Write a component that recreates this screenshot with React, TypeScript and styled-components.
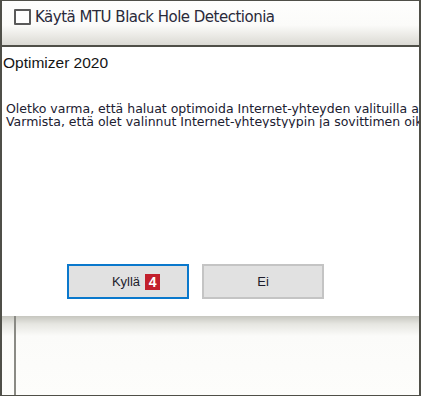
import styled, { createGlobalStyle } from "styled-components";

const GlobalStyle = createGlobalStyle`
	html, body {
		margin: 0;
		padding: 0;
		background: #ffffff;
	}
`;

const Frame = styled.div`
	width: 421px;
	height: 396px;
	box-sizing: border-box;
	border: 2px solid #4f4f48;
	border-top-width: 1px;
	border-bottom-width: 1px;
	display: flex;
	flex-direction: column;
	overflow: hidden;
	background: #fdfdfb;
`;

const SettingsBar = styled.div`
	height: 46px;
	flex-shrink: 0;
	box-sizing: border-box;
	padding: 7px 0 0 12px;
	background: linear-gradient(
		to bottom,
		#fefefd 0%,
		#fbfbf9 55%,
		#e6e5e0 85%,
		#dcdbd5 100%
	);
	border-bottom: 2px solid #4f4f48;
`;

const CheckRow = styled.label`
	display: flex;
	align-items: center;
	gap: 4px;
	font-family: "DejaVu Sans", "Liberation Sans", sans-serif;
	font-size: 15px;
	letter-spacing: -0.5px;
	color: #2a2a3a;
`;

const CheckBox = styled.span`
	width: 17px;
	height: 16px;
	box-sizing: border-box;
	border: 2px solid #5a5a5a;
	border-radius: 1px;
	background: #fff;
	flex-shrink: 0;
`;

const Dialog = styled.div`
	height: 269px;
	flex-shrink: 0;
	box-sizing: border-box;
	background: #ffffff;
	display: flex;
	flex-direction: column;
	white-space: nowrap;
`;

const DialogTitle = styled.div`
	font-family: "Liberation Sans", Arial, sans-serif;
	font-size: 15.5px;
	line-height: 18px;
	color: #151515;
	padding: 7px 0 0 1px;
`;

const Message = styled.div`
	margin-top: 30px;
	padding-left: 4px;
	font-family: "DejaVu Sans", "Liberation Sans", sans-serif;
	font-size: 12.5px;
	line-height: 13px;
	color: #202030;
	overflow: hidden;
`;

const ButtonRow = styled.div`
	margin-top: auto;
	margin-bottom: 17px;
	padding-left: 65px;
	display: flex;
	gap: 13px;
`;

const Button = styled.button<{ $primary?: boolean }>`
	width: 122px;
	height: 35px;
	box-sizing: border-box;
	background: #e1e1e1;
	border: ${(p) => (p.$primary ? "2px solid #0a78cc" : "2px solid #c4c4c4")};
	border-radius: 0;
	padding: 0;
	display: flex;
	align-items: center;
	justify-content: center;
	gap: 5px;
	font-family: "Liberation Sans", Arial, sans-serif;
	font-size: 13px;
	color: #1c1c2c;
`;

const Badge = styled.span`
	width: 15px;
	height: 16px;
	background: #c2202c;
	color: #ffffff;
	font-family: "Liberation Sans", Arial, sans-serif;
	font-weight: bold;
	font-size: 14px;
	line-height: 16px;
	text-align: center;
	margin-right: -16px;
`;

const Backdrop = styled.div`
	flex: 1;
	padding-left: 12px;
	background: linear-gradient(
		to bottom,
		#c6c6bf 0px,
		#e6e6e1 8px,
		#fbfbf9 20px,
		#fdfdfb 100%
	);
`;

const PanelEdge = styled.div`
	height: 100%;
	width: 0;
	border-left: 2px solid #8a8a84;
`;

export default function App(): JSX.Element {
	return (
		<>
			<GlobalStyle />
			<Frame>
				<SettingsBar>
					<CheckRow>
						<CheckBox />
						Käytä MTU Black Hole Detectionia
					</CheckRow>
				</SettingsBar>
				<Dialog>
					<DialogTitle>Optimizer 2020</DialogTitle>
					<Message>
						Oletko varma, että haluat optimoida Internet-yhteyden valituilla asetuksilla?
						<br />
						Varmista, että olet valinnut Internet-yhteystyypin ja sovittimen oikein.
					</Message>
					<ButtonRow>
						<Button $primary>
							Kyllä
							<Badge>4</Badge>
						</Button>
						<Button>Ei</Button>
					</ButtonRow>
				</Dialog>
				<Backdrop>
					<PanelEdge />
				</Backdrop>
			</Frame>
		</>
	);
}
